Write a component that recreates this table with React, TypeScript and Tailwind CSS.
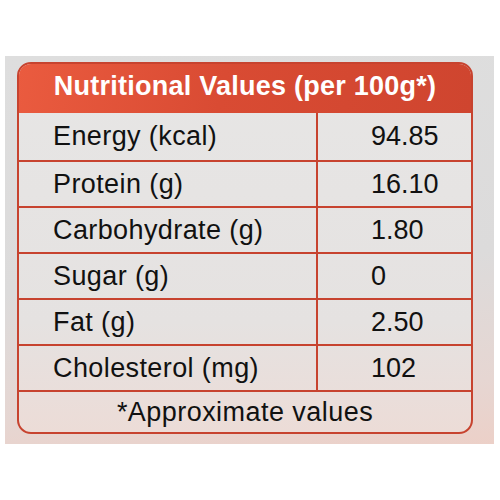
import React from 'react';

const rows = [
  { label: 'Energy (kcal)', value: '94.85' },
  { label: 'Protein (g)', value: '16.10' },
  { label: 'Carbohydrate (g)', value: '1.80' },
  { label: 'Sugar (g)', value: '0' },
  { label: 'Fat (g)', value: '2.50' },
  { label: 'Cholesterol (mg)', value: '102' },
];

export default function App() {
  return (
    <div className="w-[500px] h-[500px] bg-white pt-[56px] pl-[5px] font-['Liberation_Sans',Arial,sans-serif]">
      <div className="w-[489px] h-[388px] pt-[6px] pl-[12px] bg-[linear-gradient(175deg,#dedede_0%,#dcdbdb_55%,#e6d6d2_85%,#ecd0c8_100%)]">
        <div className="w-[456px] rounded-[14px] border-2 border-[#c7432f] overflow-hidden bg-[linear-gradient(180deg,#e7e6e5_0%,#e5e2e1_70%,#ecdcd7_100%)]">
          <div className="h-[49px] flex items-center justify-center pb-[4px] bg-[linear-gradient(100deg,#ea5b3f_0%,#d94b33_45%,#cf452f_100%)]">
            <span className="text-white font-bold text-[27px] tracking-[0.25px] leading-none">
              Nutritional Values (per 100g*)
            </span>
          </div>
          {rows.map((r, i) => (
            <div
              key={r.label}
              className={`flex border-b-2 border-[#c7432f] ${i === 0 ? 'h-[49px]' : 'h-[46px]'}`}
            >
              <div className="w-[299px] border-r-2 border-[#c7432f] flex items-center pl-[34px] text-[27px] tracking-[0.4px] text-[#111]">
                {r.label}
              </div>
              <div className="flex-1 flex items-center pl-[53px] text-[27px] text-[#111]">
                {r.value}
              </div>
            </div>
          ))}
          <div className="h-[40px] flex items-center justify-center text-[27px] tracking-[0.45px] text-[#111]">
            *Approximate values
          </div>
        </div>
      </div>
    </div>
  );
}
